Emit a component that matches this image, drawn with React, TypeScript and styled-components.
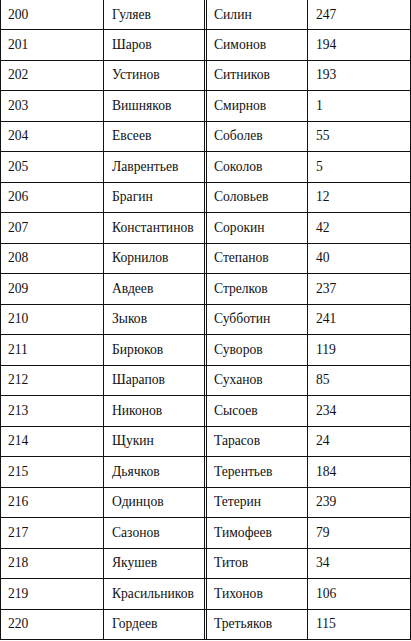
import styled, { createGlobalStyle } from "styled-components";

const GlobalStyle = createGlobalStyle`
  html, body {
    margin: 0;
    padding: 0;
    background: #ffffff;
  }
`;

const Sheet = styled.div`
  width: 411px;
  box-sizing: border-box;
  border-left: 1px solid #111;
  border-right: 1px solid #111;
  background: #fff;
`;

const Row = styled.div<{ $first?: boolean }>`
  display: grid;
  grid-template-columns: 103px 103px 101px 102px;
  box-sizing: border-box;
  height: ${(p) => (p.$first ? "30px" : "30.5px")};
  border-bottom: 1px solid #111;
`;

const Cell = styled.div<{ $pad: number; $double?: boolean; $last?: boolean }>`
  display: flex;
  align-items: center;
  box-sizing: border-box;
  padding-left: ${(p) => p.$pad}px;
  font-family: "Liberation Serif", "Times New Roman", serif;
  font-size: 13.6px;
  line-height: 1;
  color: #111;
  white-space: nowrap;
  border-right: ${(p) =>
    p.$last ? "none" : p.$double ? "3px double #111" : "1px solid #111"};
`;

type Entry = [number, string, string, number];

const rows: Entry[] = [
  [200, "Гуляев", "Силин", 247],
  [201, "Шаров", "Симонов", 194],
  [202, "Устинов", "Ситников", 193],
  [203, "Вишняков", "Смирнов", 1],
  [204, "Евсеев", "Соболев", 55],
  [205, "Лаврентьев", "Соколов", 5],
  [206, "Брагин", "Соловьев", 12],
  [207, "Константинов", "Сорокин", 42],
  [208, "Корнилов", "Степанов", 40],
  [209, "Авдеев", "Стрелков", 237],
  [210, "Зыков", "Субботин", 241],
  [211, "Бирюков", "Суворов", 119],
  [212, "Шарапов", "Суханов", 85],
  [213, "Никонов", "Сысоев", 234],
  [214, "Щукин", "Тарасов", 24],
  [215, "Дьячков", "Терентьев", 184],
  [216, "Одинцов", "Тетерин", 239],
  [217, "Сазонов", "Тимофеев", 79],
  [218, "Якушев", "Титов", 34],
  [219, "Красильников", "Тихонов", 106],
  [220, "Гордеев", "Третьяков", 115],
];

export default function App() {
  return (
    <>
      <GlobalStyle />
      <Sheet>
        {rows.map(([id, name, surname, count], i) => (
          <Row key={id} $first={i === 0}>
            <Cell $pad={7}>{id}</Cell>
            <Cell $pad={8} $double>
              {name}
            </Cell>
            <Cell $pad={7}>{surname}</Cell>
            <Cell $pad={8} $last>
              {count}
            </Cell>
          </Row>
        ))}
      </Sheet>
    </>
  );
}
